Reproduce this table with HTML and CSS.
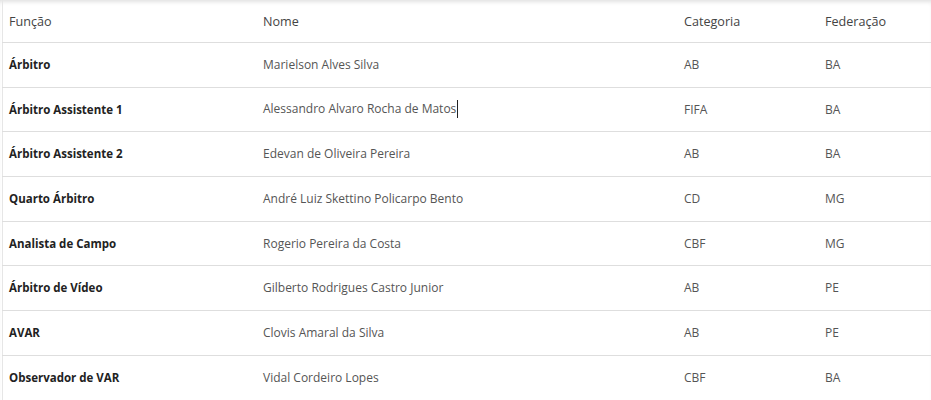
FILE: index.html
```html
<!DOCTYPE html>
<html lang="pt-BR">
<head>
<meta charset="utf-8">
<title>Arbitragem</title>
<link rel="stylesheet" href="styles.css">
</head>
<body>
<div class="panel">
  <table class="crew">
    <thead>
      <tr><th class="c1">Função</th><th class="c2">Nome</th><th class="c3">Categoria</th><th class="c4">Federação</th></tr>
    </thead>
    <tbody>
      <tr><td class="role">Árbitro</td><td>Marielson Alves Silva</td><td>AB</td><td>BA</td></tr>
      <tr><td class="role">Árbitro Assistente 1</td><td>Alessandro Alvaro Rocha de Matos<span class="caret"></span></td><td>FIFA</td><td>BA</td></tr>
      <tr><td class="role">Árbitro Assistente 2</td><td>Edevan de Oliveira Pereira</td><td>AB</td><td>BA</td></tr>
      <tr><td class="role">Quarto Árbitro</td><td>André Luiz Skettino Policarpo Bento</td><td>CD</td><td>MG</td></tr>
      <tr><td class="role">Analista de Campo</td><td>Rogerio Pereira da Costa</td><td>CBF</td><td>MG</td></tr>
      <tr><td class="role">Árbitro de Vídeo</td><td>Gilberto Rodrigues Castro Junior</td><td>AB</td><td>PE</td></tr>
      <tr><td class="role">AVAR</td><td>Clovis Amaral da Silva</td><td>AB</td><td>PE</td></tr>
      <tr><td class="role">Observador de VAR</td><td>Vidal Cordeiro Lopes</td><td>CBF</td><td>BA</td></tr>
    </tbody>
  </table>
</div>
</body>
</html>
```
FILE: styles.css
```css
html, body {
  margin: 0;
  padding: 0;
  background: #ffffff;
}
body {
  font-family: "Open Sans", "Liberation Sans", sans-serif;
  font-size: 12px;
  color: #555;
  width: 931px;
  height: 400px;
  overflow: hidden;
}
.panel {
  padding-left: 2px;
  box-shadow: inset 0 4px 4px -2px rgba(0, 0, 0, 0.12);
}
.crew {
  width: 929px;
  border-collapse: collapse;
  table-layout: fixed;
  border-left: 1px solid #e6e6e6;
}
.c1 { width: 248px; }
.c2 { width: 415px; }
.c3 { width: 135px; }
.c4 { width: auto; }
.crew th {
  text-align: left;
  font-weight: 400;
  font-size: 12.6px;
  color: #444;
  height: 42px;
  padding: 0 0 0 6px;
  border-bottom: 1px solid #dedede;
  vertical-align: middle;
}
.crew td {
  height: 42.7px;
  padding: 0 0 1px 6px;
  border-bottom: 1px solid #dedede;
  vertical-align: middle;
  color: #555;
  white-space: nowrap;
}
.crew td.role {
  font-weight: 700;
  font-size: 11.5px;
  color: #222;
}
.caret {
  display: inline-block;
  width: 1px;
  height: 18px;
  background: #222;
  vertical-align: middle;
  margin-left: 1px;
}
```
